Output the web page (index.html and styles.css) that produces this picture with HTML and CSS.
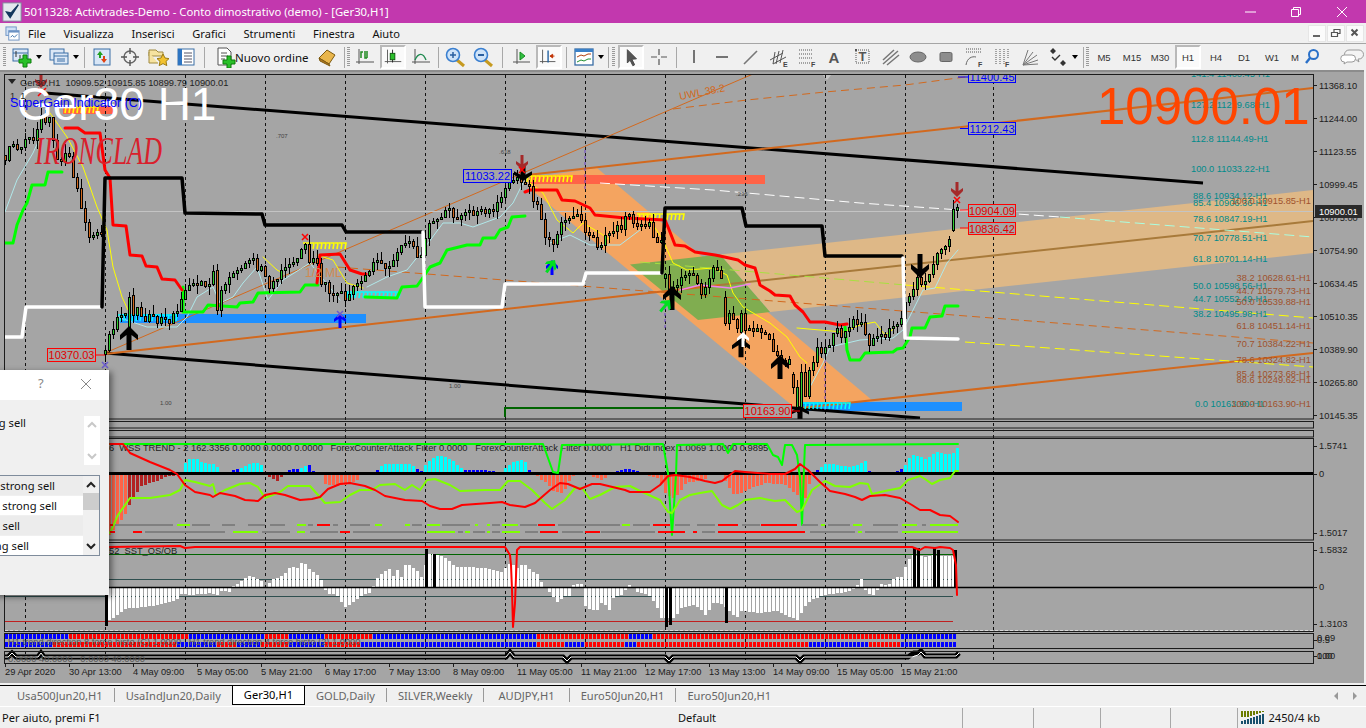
FILE: index.html
```html
<!DOCTYPE html>
<html lang="it">
<head>
<meta charset="utf-8">
<title>5011328: Activtrades-Demo - Conto dimostrativo (demo) - [Ger30,H1]</title>
<link rel="stylesheet" href="styles.css">
</head>
<body>
<div class="app">
  <header class="titlebar">
    <svg class="logo" viewBox="0 0 22 22"><rect x="1" y="1" width="20" height="20" fill="#e4e8ee"/><rect x="1" y="1" width="20" height="20" fill="none" stroke="#7d8a99"/><path d="M5 11l4 6L18 3l-8 9z" fill="#15385e" stroke="#15385e" stroke-width="1.5"/></svg>
    <span class="title-text">5011328: Activtrades-Demo - Conto dimostrativo (demo) - [Ger30,H1]</span>
    <div class="winbtns">
      <svg class="wb" viewBox="0 0 12 12"><path d="M1 6h11" stroke="#fff" fill="none"/></svg>
      <svg class="wb" viewBox="0 0 12 12"><path d="M1.5 3.5h7v7h-7zM3.5 3.5v-2h7v7h-2" stroke="#fff" fill="none"/></svg>
      <svg class="wb" viewBox="0 0 12 12"><path d="M1 1l10 10M11 1L1 11" stroke="#fff" fill="none"/></svg>
    </div>
  </header>

  <nav class="menubar">
    <svg class="mdi-icon" viewBox="0 0 16 16"><rect x="1" y="1" width="11" height="9" fill="#cfe0f5" stroke="#6d93c4"/><rect x="4" y="5" width="11" height="10" fill="#fff" stroke="#6d93c4"/><rect x="4" y="5" width="11" height="2" fill="#6d93c4"/><path d="M6 12l2-2 2 2 3-3" stroke="#3a6ea5" fill="none"/></svg>
    <span class="menu m1">File</span>
    <span class="menu m2">Visualizza</span>
    <span class="menu">Inserisci</span>
    <span class="menu">Grafici</span>
    <span class="menu">Strumenti</span>
    <span class="menu">Finestra</span>
    <span class="menu">Aiuto</span>
    <div class="mdi">
      <span class="mdib"><svg viewBox="0 0 12 12"><path d="M2 9h7" stroke="#666" stroke-width="2"/></svg></span>
      <span class="mdib"><svg viewBox="0 0 12 12"><path d="M1.5 5.5h6v4h-6zM4 5V2.5h6v4H8" stroke="#555" fill="none" stroke-width="1.2"/></svg></span>
      <span class="mdib"><svg viewBox="0 0 12 12"><path d="M2.5 2.5l6 6M8.5 2.5l-6 6" stroke="#555" stroke-width="2"/></svg></span>
    </div>
  </nav>

  <div class="toolbar">
    <i class="grip ml3"></i>
    <span class="btn ml2"><svg viewBox="0 0 24 22"><rect x="3" y="3" width="15" height="12" fill="#dbe7f6" stroke="#3a6ea5"/><path d="M3 7h15" stroke="#3a6ea5"/><path d="M6 5v6M10 9v3" stroke="#333"/><path d="M13 9h4v4h4v4h-4v4h-4v-4H9v-4h4z" fill="#28c028" stroke="#0d7d0d"/></svg></span>
    <span class="dd"></span>
    <span class="btn ml3"><svg viewBox="0 0 24 22"><rect x="3" y="3" width="14" height="11" fill="#dbe7f6" stroke="#3a6ea5"/><rect x="7" y="7" width="14" height="11" fill="#dbe7f6" stroke="#3a6ea5"/><path d="M7 10h14M10 13h8M10 15h8" stroke="#3a6ea5"/></svg></span>
    <span class="dd"></span>
    <i class="sep ml5 mr3"></i>
    <span class="btn"><svg viewBox="0 0 24 22"><rect x="4" y="3" width="16" height="16" fill="#d8e6f6" stroke="#3a6ea5"/><path d="M10 5l3 4h-2v3H9V9H7z" fill="#20a020"/><path d="M14 17l-3-4h2v-3h2v3h2z" fill="#e04010"/></svg></span>
    <span class="btn"><svg viewBox="0 0 24 22"><circle cx="12" cy="11" r="6" fill="none" stroke="#666" stroke-width="1.4"/><path d="M12 2v6M12 14v6M3 11h6M15 11h6" stroke="#555" stroke-width="1.4"/></svg></span>
    <span class="btn"><svg viewBox="0 0 24 22"><path d="M3 4h7l2 2h5v4H3z" fill="#f6e3a0" stroke="#a08a40"/><path d="M3 6v11h9" fill="#f6e3a0" stroke="#a08a40"/><path d="M17 8l2 4 4 .6-3 2.8.8 4.2-3.8-2-3.8 2 .8-4.2-3-2.8 4-.6z" fill="#f2c230" stroke="#9c7a10"/></svg></span>
    <span class="btn"><svg viewBox="0 0 24 22"><rect x="4" y="3" width="16" height="16" fill="#fff" stroke="#3a6ea5"/><rect x="4" y="3" width="4" height="16" fill="#2e75c2"/><path d="M10 7h8M10 10h8M10 13h8M10 16h8" stroke="#556"/></svg></span>
    <i class="sep ml4 mr5"></i>
    <span class="btn order"><svg viewBox="0 0 24 22"><path d="M5 2h9l4 4v13H5z" fill="#fff" stroke="#555"/><path d="M8 7h6M8 10h7M8 13h4" stroke="#555"/><path d="M14 10h4v4h4v4h-4v4h-4v-4h-4v-4h4z" fill="#28c028" stroke="#0d7d0d"/></svg><span class="order-text">Nuovo ordine</span></span>
    <span class="btn ml3"><svg viewBox="0 0 24 22"><path d="M4 12l8-8 8 5-6 9z" fill="#e9b64c" stroke="#7d5a10"/><path d="M4 12l10 6 1 2-10-5z" fill="#b0761e" stroke="#7d5a10"/></svg></span>
    <i class="sep ml3"></i>
    <i class="grip ml2 mr1"></i>
    <span class="btn"><svg viewBox="0 0 24 22"><path d="M6 3v15M3 16h18" stroke="#555" fill="none"/><path d="M8 12V6h2M14 12h-2V5M14 5v7" stroke="#208a20" fill="none" stroke-width="1.5"/></svg></span>
    <span class="btn on"><svg viewBox="0 0 24 22"><path d="M6 3v15M3 16h18" stroke="#555" fill="none"/><rect x="9" y="7" width="5" height="7" fill="#2bc02b" stroke="#0a5a0a"/><path d="M11.5 3v4M11.5 14v3" stroke="#222"/></svg></span>
    <span class="btn"><svg viewBox="0 0 24 22"><path d="M6 3v15M3 16h18" stroke="#555" fill="none"/><path d="M6 14c3-7 8-8 11 0" stroke="#208a50" fill="none" stroke-width="1.4"/></svg></span>
    <i class="sep ml3 mr2"></i>
    <span class="btn"><svg viewBox="0 0 24 22"><path d="M14 14l7 6" stroke="#c69a20" stroke-width="3"/><circle cx="10" cy="9" r="6.5" fill="#cfe3f8" stroke="#3a7fd0" stroke-width="1.6"/><path d="M7 9h6M10 6v6" stroke="#2a5fa0" stroke-width="1.5"/></svg></span>
    <span class="btn"><svg viewBox="0 0 24 22"><path d="M14 14l7 6" stroke="#c69a20" stroke-width="3"/><circle cx="10" cy="9" r="6.5" fill="#cfe3f8" stroke="#3a7fd0" stroke-width="1.6"/><path d="M7 9h6" stroke="#2a5fa0" stroke-width="2"/></svg></span>
    <i class="sep ml5 mr4"></i>
    <span class="btn"><svg viewBox="0 0 24 22"><path d="M8 3v15M4 16h17" stroke="#555" fill="none"/><path d="M11 6l5 4-5 4z" fill="#30c040" stroke="#168a20"/></svg></span>
    <span class="btn on"><svg viewBox="0 0 24 22"><path d="M5 3v15M2 16h17" stroke="#555" fill="none"/><path d="M11 4v13" stroke="#2060a0" stroke-width="1.5"/><path d="M18 10h-3M16 8l-3 2 3 2z" fill="#c03000" stroke="#c03000"/></svg></span>
    <i class="sep ml3 mr3"></i>
    <span class="btn"><svg viewBox="0 0 24 22"><rect x="3" y="3" width="18" height="16" fill="#fff" stroke="#3a6ea5" stroke-width="1.3"/><rect x="3" y="3" width="18" height="3" fill="#3a80c8"/><path d="M5 11l4-2 3 1 4-2h3" stroke="#b04010" fill="none"/><path d="M5 16l4-2 3 1 4-2h3" stroke="#209030" fill="none"/></svg></span>
    <span class="dd"></span>
    <i class="sep ml4"></i>
    <i class="grip ml3 mr2"></i>
    <span class="btn on"><svg viewBox="0 0 24 22"><path d="M8 3l10 10-5 .5 3 6-2 1-3-6-3 3z" fill="#555" stroke="#444"/></svg></span>
    <span class="btn"><svg viewBox="0 0 24 22"><path d="M12 3v6M12 13v6M4 11h6M14 11h6" stroke="#555" stroke-width="1.2"/></svg></span>
    <i class="sep ml3 mr3"></i>
    <span class="btn"><svg viewBox="0 0 24 22"><path d="M12 4v13" stroke="#555" stroke-width="1.6"/></svg></span>
    <span class="btn"><svg viewBox="0 0 24 22"><path d="M6 11h12" stroke="#555" stroke-width="1.6"/></svg></span>
    <span class="btn"><svg viewBox="0 0 24 22"><path d="M6 18L19 5" stroke="#777" stroke-width="1.6"/></svg></span>
    <span class="btn"><svg viewBox="0 0 24 22"><path d="M4 14L17 7M7 18L20 11M9 6l-2 12M13 5l-3 13M17 4l-3 13" stroke="#555" fill="none"/><text class="ic-t" x="17" y="21">E</text></svg></span>
    <span class="btn"><svg viewBox="0 0 24 22"><path d="M5 4h14M5 8h14M5 12h14M5 17h11" stroke="#555" stroke-dasharray="1 1" fill="none"/><text class="ic-t" x="17" y="21">F</text></svg></span>
    <span class="btn"><svg viewBox="0 0 24 22"><text class="ic-a" x="12" y="17">A</text></svg></span>
    <span class="btn"><svg viewBox="0 0 24 22"><rect x="6" y="4" width="13" height="13" fill="none" stroke="#555" stroke-dasharray="1 1"/><rect x="5" y="3" width="2" height="2" fill="#555"/><text class="ic-a2" x="12.5" y="15">T</text></svg></span>
    <span class="btn"><svg viewBox="0 0 24 22"><path d="M5 14L16 4M5 18L20 5M9 19L21 9" stroke="#777" stroke-width="1.5"/></svg></span>
    <span class="btn"><svg viewBox="0 0 24 22"><ellipse cx="12" cy="11" rx="8" ry="5" fill="#8d8d8d" stroke="#666"/></svg></span>
    <span class="btn"><svg viewBox="0 0 24 22"><rect x="6" y="6.5" width="12" height="9" rx="1.5" fill="#8d8d8d" stroke="#666"/></svg></span>
    <span class="btn"><svg viewBox="0 0 24 22"><path d="M4 3h15M4 6h15" stroke="#555" stroke-dasharray="1 1"/><path d="M4 19c1-7 6-9 10-8" stroke="#666" fill="none"/><text class="ic-t" x="16" y="21">F</text></svg></span>
    <span class="btn"><svg viewBox="0 0 24 22"><path d="M6 3v15M10 3v15M14 3v15M18 3v10" stroke="#555" stroke-dasharray="1 1"/><text class="ic-t" x="15" y="21">F</text></svg></span>
    <span class="btn"><svg viewBox="0 0 24 22"><path d="M5 19L10 4M5 19L15 6M5 19L19 9M5 19L20 14M5 19L20 18" stroke="#777"/></svg></span>
    <span class="btn"><svg viewBox="0 0 24 22"><path d="M7 2l3 3-3 3-3-3zM17 14l3 3-3 3-3-3z" fill="#333"/><path d="M6 11l3 3 5-5" stroke="#333" fill="none" stroke-width="1.4"/></svg></span>
    <span class="dd"></span>
    <i class="sep ml5"></i>
    <i class="grip ml2 mr1"></i>
    <span class="tf">M5</span><span class="tf">M15</span><span class="tf">M30</span><span class="tf on">H1</span><span class="tf">H4</span><span class="tf">D1</span><span class="tf">W1</span><span class="tf short">M</span>
    <span class="btn search"><svg viewBox="0 0 16 18"><circle cx="9.5" cy="6.5" r="4.5" fill="none" stroke="#2a70c8" stroke-width="2"/><path d="M6 10l-4 5" stroke="#2a70c8" stroke-width="2.4"/></svg></span>
    <span class="btn chat"><svg viewBox="0 0 24 20"><path d="M9 3h10a4 4 0 010 9h-1l1 3-4-3H9a4 4 0 010-9z" fill="#f4f4f4" stroke="#999"/><path d="M4 8h8a3.5 3.5 0 010 7H7l-3 2 .5-2A3.5 3.5 0 014 8z" fill="#fff" stroke="#999"/></svg></span>
  </div>

  <main class="chartwin">
    <svg class="chart" viewBox="0 70 1366 613" width="1366" height="613" xmlns="http://www.w3.org/2000/svg">
      <defs>
        <clipPath id="mainclip"><rect x="5" y="75" width="1308" height="344"/></clipPath>
        <path id="arw" d="M0 0L9 9V14L2.5 9V24H-2.5V9L-9 14V9Z"/>
        <path id="arwT" d="M0 0L6 6V9L1.5 6V15H-1.5V6L-6 9V6Z"/>
      </defs>
      <rect class="bgtop" x="0" y="70" width="1366" height="2"/>
      <rect class="bgedge" x="1364" y="70" width="2" height="613"/>

      <!-- bands and boxes -->
      <g clip-path="url(#mainclip)">
        <polygon class="sandy" points="528,178 597,168 873,401 800,412 528,187"/>
        <polygon class="tan" points="720,254.5 1313,190 1313,253 770,312"/>
        <polygon class="olive" points="630,264.5 720,254.5 770,312 698,320"/>
        <rect class="tomato" x="530" y="175" width="235" height="9"/>
        <rect class="tomato" x="63" y="106" width="50" height="8"/>
        <rect class="dodger" x="120" y="314" width="246" height="9"/>
        <rect class="dodger" x="803" y="402" width="159" height="9"/>
        <polygon class="tri" points="822,74 832,74 827,80"/>
      </g>

      <!-- vertical separators -->
      <g id="grid"></g>

      <g clip-path="url(#mainclip)">
        <!-- channels -->
        <path class="o3" d="M45 93L1203 183"/>
        <path class="b3" d="M105 353L920 418"/>
        <path class="ou2" d="M105 354L720 285"/>
        <path class="br2" d="M720 285L1313 221"/>
        <path class="ou2" d="M800 408L1313 353"/>
        <path class="ou2" d="M527 175L1313 88"/>
        <path class="ou1" d="M105 353L753 74"/>
        <path class="dash-o" d="M673 109L747 100L825 92L905 85L980 75"/>
        <path class="dash-w" d="M600 183L713 190L860 203L960 210L1060 217"/>
        <path class="dash-c" d="M1060 217L1313 237"/>
        <path class="dash-y" d="M905 285L1313 318"/>
        <path class="dash-o" d="M337 267L1313 343"/>
        <path class="dash-y" d="M965 342L1313 367"/>
        <path class="dash-l" d="M640 262L905 285"/>
        <path class="dgreen" d="M505 417V408H743"/>
        <path class="pur" d="M585 150V190M825 360V410M665 295V330"/>
        <path class="bid" d="M5 211.5H1313"/>

        <!-- moving averages -->
        <polyline class="yel" points="50,113 67,137 83,167 97,207 107,230 113,267 122,297 128,310"/>
        <polyline class="yel" points="263,257 277,270 283,273"/>
        <polyline class="yel" points="317,255 333,260 347,283 363,288"/>
        <polyline class="yel" points="530,183 543,193 557,220 573,233 583,223 600,233 610,240"/>
        <polyline class="yel" points="637,218 650,220 663,240 673,263 687,270 713,268 727,275 733,293 743,307 770,323 787,337 800,357 807,363"/>
        <polyline class="yel" points="797,328 820,330 843,332 860,325 875,322 885,335 895,328"/>
        <polyline class="pale" points="5,212 17,180 33,153 38,142"/>
        <polyline class="pale" points="117,317 147,327 177,327 187,317 197,297 213,287 220,303 233,297 243,283 257,267 268,300 283,280 310,263 340,300"/>
        <polyline class="pale" points="367,287 387,277 407,270 423,250 443,223 460,223 473,227 500,217 513,203 523,183"/>
        <polyline class="pale" points="550,243 570,235 590,245 620,245 640,230"/>
        <polyline class="pale" points="810,387 823,363 830,347 860,340 893,338 903,330 923,290 935,288 947,263 958,250"/>
        <polyline class="pink" points="680,290 700,285 730,288 750,284"/>
      </g>

      <g id="zig" clip-path="url(#mainclip)"></g>
      <g clip-path="url(#mainclip)">
        <!-- Stepped support and resistance -->
        <polyline class="grn" points="5,243 13,243 17,225 23,210 27,203 32,185 45,185 48,172 62,172"/>
        <polyline class="grn" points="183,287 183,312 203,312 208,305 237,307 240,303 253,302 258,293 300,292 305,285 318,285"/>
        <polyline class="grn" points="365,297 397,298 402,287 417,286 422,279 430,267 440,263 447,250 467,245 480,245 483,238 495,238 500,230 508,227 512,217 525,216"/>
        <polyline class="grn" points="845,327 847,350 850,360 860,360 865,353 893,352 897,349 903,348 910,337 912,328 925,328 930,317 942,316 945,306 958,306"/>
        <polyline class="red" points="65,128 78,128 85,133 100,133 105,170 110,178 113,225 126,226 130,255 142,256 146,266 157,267 162,279 175,280 182,290"/>
        <polyline class="red" points="317,283 320,255 340,254 350,270 362,274 366,274"/>
        <polyline class="red" points="525,192 530,190 557,190 562,200 575,201 590,208 595,215 625,218 665,220 668,227 675,245 685,246 695,252 715,255 720,256 738,260 745,265 755,268 760,285 770,291 775,295 790,296 795,305 803,312 810,322 825,322 840,325 847,324"/>
      </g>

      <g id="candles" clip-path="url(#mainclip)"></g>

      <g clip-path="url(#mainclip)">
        <polyline class="wht" points="5,337 22,337 26,307 101,307"/>
        <polyline class="blk" points="102,307 105,178 182,178 185,213 262,214 265,225 342,225 346,232 423,232"/>
        <polyline class="wht" points="423,232 425,307 502,307 505,284 583,284 586,273 662,273"/>
        <polyline class="blk" points="662,273 665,208 742,208 746,226 822,226 825,256 902,256"/>
        <polyline class="wht" points="903,258 905,338 958,339"/>

        <!-- signal arrows -->
        <use href="#arw" class="a-blk" transform="translate(129,326)"/>
        <use href="#arw" class="a-blk" transform="translate(672,286)"/>
        <use href="#arw" class="a-blk" transform="translate(741,338) scale(1,.8)"/>
        <use href="#arwT" class="a-wht" transform="translate(743,332)"/>
        <use href="#arw" class="a-blk" transform="translate(780,355)"/>
        <use href="#arw" class="a-blk" transform="translate(920,278) scale(1,-1)"/>
        <use href="#arw" class="a-blk" transform="translate(523,181) scale(1,-.7)"/>
        <use href="#arwT" class="a-dred" transform="translate(522,170) scale(1,-1)"/>
        <use href="#arwT" class="a-dred" transform="translate(957,197) scale(1,-1)"/>
        <use href="#arwT" class="a-dred" transform="translate(41,88) scale(1,-1)"/>
        <use href="#arwT" class="a-blu" transform="translate(340,313)"/>
        <use href="#arwT" class="a-blu" transform="translate(552,260)"/>
        <use href="#arwT" class="a-grn" transform="translate(555,260) rotate(35)"/>
        <use href="#arwT" class="a-grn" transform="translate(670,300) rotate(40)"/>
        <use href="#arw" class="a-blk" transform="translate(800,406) scale(1,.6)"/>
        <path class="x-red" d="M302 234l6 6M308 234l-6 6M519 167l6 6M525 167l-6 6M954 197l6 6M960 197l-6 6M38 88l8 8M38 96l8-8"/>
        <path class="x-pur" d="M102 362l6 6M108 362l-6 6M337 311l6 6M343 311l-6 6"/>
        <path class="price-line" d="M96 355H105M960 210H968M960 228H968M792 411H800"/>
      </g>

      <!-- small object labels -->
      <g clip-path="url(#mainclip)">
        <text class="wee" x="276" y="138">.707</text>
        <text class="wee" x="160" y="405">1.00</text>
        <text class="wee" x="499" y="154">.618</text>
        <text class="wee" x="736" y="196">.236</text>
        <text class="wee" x="449" y="388">1.00</text>
        <text class="ml-t" x="305" y="277">1/2 ML</text>
        <text class="uwl" transform="translate(680,100) rotate(-11)">UWL 38.2</text>
        <text class="iron" x="35" y="164" textLength="127" lengthAdjust="spacingAndGlyphs">IRONCLAD</text>

        <text class="te" x="1191" y="77">141.4 11400.45-H1</text>
        <text class="te" x="1191" y="108">127.2 11219.68-H1</text>
        <text class="te" x="1191" y="142">112.8 11144.49-H1</text>
        <text class="te" x="1191" y="172">100.0 11033.22-H1</text>
        <text class="te" x="1193" y="199">88.6 10934.12-H1</text>
        <text class="te" x="1193" y="206">85.4 10906.36-H1</text>
        <text class="te" x="1193" y="222">78.6 10847.19-H1</text>
        <text class="te" x="1193" y="241">70.7 10778.51-H1</text>
        <text class="te" x="1193" y="262">61.8 10701.14-H1</text>
        <text class="te" x="1193" y="289">50.0 10598.56-H1</text>
        <text class="te" x="1193" y="302">44.7 10552.49-H1</text>
        <text class="te" x="1193" y="317">38.2 10495.98-H1</text>
        <text class="te" x="1195" y="407">0.0 10163.90-H1</text>
        <text class="si" x="1311" y="204">100.0 10915.85-H1</text>
        <text class="si" x="1311" y="281">38.2 10628.61-H1</text>
        <text class="si" x="1311" y="294">44.7 10579.73-H1</text>
        <text class="si" x="1311" y="305">50.0 10539.88-H1</text>
        <text class="si" x="1311" y="329">61.8 10451.14-H1</text>
        <text class="si" x="1311" y="347">70.7 10384.22-H1</text>
        <text class="si" x="1311" y="363">78.6 10324.82-H1</text>
        <text class="si" x="1311" y="377">85.4 10273.68-H1</text>
        <text class="si" x="1311" y="383">88.6 10249.62-H1</text>
        <text class="si" x="1311" y="407">100.0 10163.90-H1</text>

        <path class="blu-line" d="M958 77H969M960 128.5H969"/>
        <rect class="box-b" x="968.5" y="72.5" width="47" height="10"/>
        <text class="lbl-b" x="992" y="81">11400.45</text>
        <rect class="box-b" x="968.5" y="122.5" width="47" height="12"/>
        <text class="lbl-b" x="992" y="132.5">11212.43</text>
        <rect class="box-b" x="463.5" y="169.5" width="48" height="13"/>
        <text class="lbl-b" x="487.5" y="180">11033.22</text>
        <rect class="box-r" x="47.5" y="348.5" width="48" height="13"/>
        <text class="lbl-r" x="71.5" y="359">10370.03</text>
        <rect class="box-r" x="743.5" y="404.5" width="48" height="13"/>
        <text class="lbl-r" x="767.5" y="415">10163.90</text>
        <rect class="box-r" x="968.5" y="204.5" width="47" height="12"/>
        <text class="lbl-r" x="992" y="215">10904.09</text>
        <rect class="box-r" x="968.5" y="222.5" width="47" height="12"/>
        <text class="lbl-r" x="992" y="233">10836.42</text>

        <text class="big-w" x="17" y="120">Ger30 H1</text>
        <text class="big-o" x="1097" y="124">10900.01</text>
        <path class="tri-d" d="M8 79h8l-4 5z"/>
        <text class="ohlc" x="20" y="86">Ger30,H1  10909.52 10915.85 10899.79 10900.01</text>
        <text class="ohlc" x="10" y="99">1  1</text>
        <text class="sgi" x="10" y="107">SuperGain Indicator (C)</text>
      </g>

      <!-- oscillator 1 -->
      <text class="ohlc" x="109" y="451">6  WSS TREND - 2 162.3356 0.0000 0.0000 0.0000   ForexCounterAttack Filter 0.0000   ForexCounterAttack Filter 0.0000   H1 Didi index 1.0069 1.0000 0.9895</text>
      <g id="hist1"></g>
      <path class="zero" d="M5 473.5H1313"/>
      <polyline class="grn2" points="110,444 543,444 553,472 558,473 562,445 663,444 668,473 672,535 676,475 677,445 723,444 728,453 733,444 767,444 773,455 778,457 782,465 785,445 792,445 797,455 800,478 802,525 804,468 805,445 958,444"/>
      <polyline class="lime" points="110,533 118,515 130,498 150,498 170,495 180,490 185,480 195,482 210,486 213,484 216,495 225,490 240,484 250,483 258,487 265,498 280,492 288,486 300,486 310,486 318,495 325,503 340,502 350,495 360,490 372,490 380,485 395,484 405,490 412,485 420,490 427,480 435,479 450,485 460,491 485,490 500,490 508,481 520,481 532,490 545,503 552,509 565,500 575,488 582,488 590,499 600,495 615,487 630,486 640,491 660,500 668,512 672,513 680,500 690,495 700,493 712,491 722,505 730,509 738,505 745,500 760,498 775,501 785,500 797,512 802,510 812,490 825,481 835,486 850,487 860,483 868,484 872,494 885,491 900,488 908,480 920,476 925,479 932,484 940,480 950,478 955,471 958,471"/>
      <polyline class="redc" points="110,444 123,444 130,453 150,462 170,470 177,474 185,485 195,492 210,495 213,497 220,493 235,496 245,500 258,501 265,495 275,493 285,495 300,500 312,499 320,497 328,489 340,484 350,483 365,486 375,490 385,496 405,500 422,501 430,506 440,509 452,509 462,505 490,503 502,502 510,505 525,507 535,503 550,490 560,483 568,484 580,489 592,484 600,484 625,490 630,492 650,492 660,485 668,476 675,475 690,477 705,481 715,483 722,481 735,471 745,472 770,474 785,474 795,469 800,464 808,470 820,482 830,491 845,494 855,497 862,500 870,496 885,495 900,498 912,505 920,510 930,510 940,515 950,516 958,522"/>
      <g id="dashes"></g>

      <!-- oscillator 2 -->
      <text class="ohlc" x="109" y="554">52  SST_OS/OB</text>
      <path class="lvl-g" d="M5 554.5H953"/>
      <path class="lvl-t" d="M5 579.5H953M5 596.5H953"/>
      <path class="lvl-r" d="M5 621.5H953"/>
      <g id="hist2"></g>
      <path class="zero2" d="M5 587.5H1313"/>
      <polyline class="redc" points="110,547 180,546 185,548 195,547 505,547 510,555 511,565 512,590 513,627 515,603 517,550 520,547 912,547 920,550 925,547 935,548 940,547 950,548 953,550 956,565 957,595"/>
      <path class="dash-g" d="M5 630.5H1313"/>

      <!-- direction squares -->
      <g id="squares"></g>
      <text class="faint" x="8" y="645">H1 trend direction 8 force histo (C) 1.0000   H1 trend direction 4 force histo (2) 1.0000</text>

      <!-- bottom line pane -->
      <polyline class="hl-b" points="5,657 8,657 12,653 16,657 38,657 41,653 44,657 506,657 510,652 514,657 563,657 567,661 571,657 665,657 669,661 673,657 796,657 800,661 804,657 908,657 914,653 918,653 921,651 925,656 956,656 959,653"/>
      <polyline class="hl-w" points="5,657 8,657 12,653 16,657 38,657 41,653 44,657 506,657 510,652 514,657 563,657 567,661 571,657 665,657 669,661 673,657 796,657 800,661 804,657 912,657 918,655 921,652 925,656 956,656 959,653"/>
      <text class="faint" x="8" y="662">0.0000 40.0000   0.0000 40.0000</text>

      <!-- pane frames -->
      <g class="frames">
        <rect x="4.5" y="74.5" width="1309" height="344.5"/>
        <rect x="4.5" y="421.5" width="1309" height="6.5"/>
        <rect x="4.5" y="430.5" width="1309" height="6.5"/>
        <rect x="4.5" y="438.5" width="1309" height="101.5"/>
        <rect x="4.5" y="542.5" width="1309" height="89"/>
        <rect x="4.5" y="633.5" width="1309" height="15"/>
        <rect x="4.5" y="651.5" width="1309" height="12"/>
      </g>
      <g id="ticks"></g>

      <!-- price scale -->
      <g class="axis">
        <text x="1319" y="89">11368.10</text>
        <text x="1319" y="122">11244.00</text>
        <text x="1319" y="155">11123.55</text>
        <text x="1319" y="188">10999.45</text>
        <text x="1319" y="221">10875.00</text>
        <text x="1319" y="254">10754.90</text>
        <text x="1319" y="287">10634.45</text>
        <text x="1319" y="320">10510.35</text>
        <text x="1319" y="353">10389.90</text>
        <text x="1319" y="386">10265.80</text>
        <text x="1319" y="419">10145.35</text>
        <text x="1319" y="449">1.5741</text>
        <text x="1319" y="477">0</text>
        <text x="1319" y="536">1.5017</text>
        <text x="1319" y="553">1.5832</text>
        <text x="1319" y="590">0</text>
        <text x="1319" y="627">1.3103</text>
        <text x="1317" y="641">0.09</text>
        <text x="1317" y="643">0.5</text>
        <text x="1317" y="659">0.00</text>
        <text x="1317" y="659">100</text>
      </g>
      <rect class="tag" x="1315" y="205" width="47" height="13"/>
      <text class="tag-t" x="1319" y="215">10900.01</text>

      <!-- time scale -->
      <g class="axis">
        <text x="5" y="675">29 Apr 2020</text>
        <text x="69" y="675">30 Apr 13:00</text>
        <text x="133" y="675">4 May 09:00</text>
        <text x="197" y="675">5 May 05:00</text>
        <text x="261" y="675">5 May 21:00</text>
        <text x="325" y="675">6 May 17:00</text>
        <text x="389" y="675">7 May 13:00</text>
        <text x="453" y="675">8 May 09:00</text>
        <text x="517" y="675">11 May 05:00</text>
        <text x="581" y="675">11 May 21:00</text>
        <text x="645" y="675">12 May 17:00</text>
        <text x="709" y="675">13 May 13:00</text>
        <text x="773" y="675">14 May 09:00</text>
        <text x="837" y="675">15 May 05:00</text>
        <text x="901" y="675">15 May 21:00</text>
      </g>
    </svg>

    <section class="dialog">
      <div class="dlg-title"><span class="dlg-q">?</span><svg class="dlg-x" viewBox="0 0 12 12"><path d="M1 1l10 10M11 1L1 11" stroke="#888" fill="none"/></svg></div>
      <div class="dlg-body">
        <div class="dlg-top">
          <span class="dlg-line">Segnale H1 strong sell</span>
          <div class="dlg-scroll"><svg viewBox="0 0 12 8"><path d="M2 6l4-4 4 4" stroke="#c8c8c8" fill="none" stroke-width="2"/></svg><svg viewBox="0 0 12 8"><path d="M2 2l4 4 4-4" stroke="#c8c8c8" fill="none" stroke-width="2"/></svg></div>
        </div>
        <div class="dlg-list">
          <div class="dlg-rows">
            <div class="row alt p28">Segnale 1: strong sell</div>
            <div class="row p26">Segnale 2: strong sell</div>
            <div class="row alt p63">Segnale 3: strong sell</div>
            <div class="row p54">Segnale 4: strong sell</div>
          </div>
          <div class="dlg-sb">
            <svg viewBox="0 0 12 8"><path d="M2 6l4-4 4 4" stroke="#222" fill="none" stroke-width="2"/></svg>
            <i class="thumb"></i>
            <svg viewBox="0 0 12 8"><path d="M2 2l4 4 4-4" stroke="#222" fill="none" stroke-width="2"/></svg>
          </div>
        </div>
      </div>
    </section>
  </main>

  <div class="tabs">
    <span class="tab">Usa500Jun20,H1</span><i class="tsep"></i>
    <span class="tab">UsaIndJun20,Daily</span>
    <span class="tab active">Ger30,H1</span>
    <span class="tab">GOLD,Daily</span><i class="tsep"></i>
    <span class="tab">SILVER,Weekly</span><i class="tsep"></i>
    <span class="tab aud">AUDJPY,H1</span><i class="tsep"></i>
    <span class="tab">Euro50Jun20,H1</span><i class="tsep"></i>
    <span class="tab">Euro50Jun20,H1</span>
    <div class="tab-nav"><i class="tl"></i><i class="tr"></i></div>
  </div>

  <footer class="status">
    <span class="st-help">Per aiuto, premi F1</span>
    <span class="st-prof">Default</span>
    <i class="st-sep s1"></i><i class="st-sep s2"></i><i class="st-sep s3"></i><i class="st-sep s4"></i><i class="st-sep s5"></i>
    <svg class="st-bars" viewBox="0 0 24 13"><path d="M1 0v6M4 0v6M7 0v6M10 0v5M13 0v4M16 0v3M19 0v2M22 0v1" stroke="#6b7d00" stroke-width="2"/><path d="M1 10v3M4 9v4M7 8v5M10 7v6M13 6v7M16 5v8M19 4v9M22 3v10" stroke="#17506c" stroke-width="2"/></svg>
    <span class="st-kb">2450/4 kb</span>
  </footer>
</div>
<script src="chart.js"></script>
</body>
</html>
```
FILE: styles.css
```css
* { box-sizing: border-box; }
html, body { margin: 0; padding: 0; overflow: hidden; background: #f0f0f0; }
.app { width: 1366px; height: 728px; display: flex; flex-direction: column; overflow: hidden;
  font-family: "Noto Sans", "Liberation Sans", sans-serif; font-size: 11px; color: #111; }

/* window title */
.titlebar { height: 23px; background: #c238ae; display: flex; align-items: center; color: #fff; padding-left: 2px; }
.logo { width: 20px; height: 20px; }
.title-text { margin-left: 2px; font-size: 11.3px; white-space: nowrap; }
.winbtns { margin-left: auto; display: flex; padding-right: 18px; gap: 34px; }
.wb { width: 12px; height: 12px; }

/* menu */
.menubar { height: 21px; background: #f0f0f0; border-bottom: 1px solid #a5a5a5; display: flex; align-items: center; padding-left: 5px; gap: 17.7px; position: relative; }
.mdi-icon { width: 15px; height: 15px; }
.menu { font-size: 11.1px; white-space: nowrap; }
.m1 { margin-left: -9.7px; }
.mdi { margin-left: auto; display: flex; gap: 1px; padding-right: 2px; }
.mdib { width: 18px; height: 17px; background: #fbfbfb; border: 1px solid #e6e6e6; display: flex; align-items: center; justify-content: center; }
.mdib svg { width: 12px; height: 12px; }

/* toolbar */
.toolbar { height: 26px; background: #f0f0f0; display: flex; align-items: center; }
.grip { display: block; width: 3px; height: 20px; background: repeating-linear-gradient(#9a9a9a 0 1px, #f0f0f0 1px 2px); }
.sep { display: block; width: 1px; height: 21px; background: #a8a8a8; }
.ml2 { margin-left: 2px; } .ml3 { margin-left: 3px; } .ml4 { margin-left: 4px; } .ml5 { margin-left: 5px; }
.mr1 { margin-right: 1px; } .mr2 { margin-right: 2px; } .mr3 { margin-right: 3px; } .mr4 { margin-right: 4px; } .mr5 { margin-right: 5px; }
.btn { width: 28px; height: 24px; display: flex; align-items: center; justify-content: center; flex: none; }
.btn svg { width: 24px; height: 22px; }
.btn.on { width: 26px; margin: 0 1px; background: #fafafa; border: 2px solid; border-color: #b9b9b9 #fff #fff #b9b9b9; }
.dd { width: 6px; height: 24px; position: relative; flex: none; }
.dd::after { content: ""; position: absolute; left: 0; top: 10px; border: 3px solid transparent; border-top: 4px solid #000; border-bottom: 0; }
.order { width: 100px; justify-content: flex-start; padding-left: 3px; }
.order-text { font-size: 11.5px; margin-left: -2px; white-space: nowrap; }
.ic-t { font: bold 7px "Liberation Sans", sans-serif; fill: #444; }
.ic-a { font: bold 15px "Liberation Sans", sans-serif; fill: #555; text-anchor: middle; }
.ic-a2 { font: bold 13px "Liberation Sans", sans-serif; fill: #555; text-anchor: middle; }
.tf { width: 28px; height: 24px; display: flex; align-items: center; justify-content: center; font-family: "Liberation Sans", sans-serif; font-size: 9.5px; color: #333; flex: none; }
.tf.on { width: 26px; margin: 0 1px; background: #fafafa; border: 2px solid; border-color: #b9b9b9 #fff #fff #b9b9b9; }
.tf.short { width: 18px; }
.search { width: 16px; }
.search svg { width: 16px; height: 18px; }
.chat { margin-left: 18px; }

/* chart window */
.chartwin { height: 613px; position: relative; background: #a5a5a5; }
.chart { display: block; font-family: "Liberation Sans", sans-serif; }
.bgtop { fill: #8c8c8c; }
.bgedge { fill: #f0f0f0; }
.sandy { fill: #f4a460; }
.tan { fill: #deb887; }
.olive { fill: #80ad50; }
.tomato { fill: #ff6347; }
.dodger { fill: #1e90ff; }
.tri { fill: #c4c4c4; }
.grid-l { stroke: #111; stroke-width: 1; stroke-dasharray: 3 3; shape-rendering: crispEdges; }
polyline, .o3, .b3, .ou2, .br2, .ou1, .dash-o, .dash-w, .dash-c, .dash-y, .dash-l, .dgreen, .pur, .bid, .x-red, .x-pur, .price-line, .blu-line, .zero, .zero2, .lvl-g, .lvl-t, .lvl-r, .dash-g { fill: none; }
polyline { stroke-linejoin: round; stroke-linecap: round; }
.o3, .b3 { stroke: #000; stroke-width: 3; }
.ou2 { stroke: #d2691e; stroke-width: 2; }
.br2 { stroke: #a87a3a; stroke-width: 2; }
.ou1 { stroke: #d2691e; stroke-width: 1; }
.dash-o { stroke: #d2691e; stroke-width: 1; stroke-dasharray: 8 5; }
.dash-w { stroke: #fff; stroke-width: 1; stroke-dasharray: 10 5; }
.dash-c { stroke: #aaffe0; stroke-width: 1; stroke-dasharray: 10 5; }
.dash-y { stroke: #ffff00; stroke-width: 1; stroke-dasharray: 10 5; }
.dash-l { stroke: #a8e040; stroke-width: 1; stroke-dasharray: 10 5; }
.dgreen { stroke: #006400; stroke-width: 2; }
.pur { stroke: #6a40c8; stroke-width: 1; stroke-dasharray: 3 3; }
.bid { stroke: #c4c4c4; stroke-width: 1; shape-rendering: crispEdges; }
.yel { stroke: #ffff00; stroke-width: 1; }
.pale { stroke: #b0e8ea; stroke-width: 1; }
.pink { stroke: #ee82ee; stroke-width: 1.5; }
.grn { stroke: #00ff00; stroke-width: 3; }
.red { stroke: #ff0000; stroke-width: 3; }
.wht { stroke: #fff; stroke-width: 3.5; }
.blk { stroke: #000; stroke-width: 3.5; }
.wick { stroke: #000; stroke-width: 1; shape-rendering: crispEdges; }
.c-up { fill: #32cd32; stroke: #000; stroke-width: 1; shape-rendering: crispEdges; }
.c-dn { fill: #d2691e; stroke: #000; stroke-width: 1; shape-rendering: crispEdges; }
.zig-y { stroke: #ffff00; stroke-width: 1.6; }
.zig-c { stroke: #00ffff; stroke-width: 1.6; }
.a-blk { fill: #000; }
.a-wht { fill: #fff; }
.a-dred { fill: #a52a2a; }
.a-blu { fill: #0000ff; }
.a-grn { fill: #00e020; }
.x-red { stroke: #ff0000; stroke-width: 1.5; }
.x-pur { stroke: #6a5acd; stroke-width: 1.5; }
.price-line { stroke: #ff0000; stroke-width: 1; }
.blu-line { stroke: #0000ff; stroke-width: 1; }
.wee { font-size: 6px; fill: #444; }
.ml-t { font-size: 12px; fill: #d28a50; }
.uwl { font-size: 10.5px; fill: #d2691e; }
.iron { font-family: "Liberation Serif", serif; font-style: italic; font-size: 40px; fill: #d9202c; }
.te { font-size: 9.3px; fill: #008b8b; }
.si { font-size: 9.3px; fill: #a0522d; text-anchor: end; }
.box-b, .box-r { fill: #a5a5a5; stroke-width: 1; }
.box-b { stroke: #0000ff; }
.box-r { stroke: #ff0000; }
.lbl-b, .lbl-r { font-size: 11px; text-anchor: middle; }
.lbl-b { fill: #0000ff; }
.lbl-r { fill: #e00000; }
.big-w { font-size: 46px; fill: #fff; }
.big-o { font-size: 51px; fill: #ff4500; }
.tri-d { fill: #222; }
.ohlc { font-size: 9.3px; fill: #222; white-space: pre; }
.sgi { font-size: 12.5px; fill: #0000ff; }
.faint { font-size: 9.3px; fill: #555; white-space: pre; }
.zero { stroke: #000; stroke-width: 3; }
.zero2 { stroke: #000; stroke-width: 1.5; }
.grn2 { stroke: #00ff00; stroke-width: 2; }
.lime { stroke: #7fff00; stroke-width: 2; }
.redc { stroke: #ff0000; stroke-width: 2; }
.lvl-g { stroke: #006400; stroke-width: 1; }
.lvl-t { stroke: #2f4f4f; stroke-width: 1; }
.lvl-r { stroke: #c02020; stroke-width: 1; }
.dash-g { stroke: #d8d8d8; stroke-width: 1; stroke-dasharray: 3 2; }
.hist-cy { fill: #00ffff; }
.hist-bl { fill: #0000ff; }
.hist-to { fill: #ff6347; }
.hist-fb { fill: #b22222; }
.hist-w { fill: #fff; }
.hist-k { fill: #000; }
.sq-b { fill: #0000ff; }
.sq-r { fill: #ff0000; }
.seg { stroke-width: 2; }
.seg-g { stroke: #808080; }
.seg-l { stroke: #7fff00; }
.seg-r { stroke: #ff0000; }
.hl-b { stroke: #000; stroke-width: 5; stroke-linejoin: miter; stroke-linecap: butt; }
.hl-w { stroke: #fff; stroke-width: 1; stroke-linejoin: miter; stroke-linecap: butt; }
.frames rect { fill: none; stroke: #1c1c1c; stroke-width: 1; }
.tick { stroke: #1c1c1c; stroke-width: 1; }
.axis text { font-size: 9.3px; fill: #1c1c1c; }
.tag { fill: #2a2a2a; }
.tag-t { font-size: 9.3px; fill: #fff; }

/* floating dialog */
.dialog { position: absolute; left: -200px; top: 300px; width: 309px; height: 225px; background: #f0f0f0; display: flex; flex-direction: column; box-shadow: 3px 2px 6px rgba(0,0,0,.45); }
.dlg-title { height: 30px; background: #fff; position: relative; flex: none; }
.dlg-q { position: absolute; left: 238px; top: 4px; font-size: 13px; color: #888; }
.dlg-x { position: absolute; left: 280px; top: 8px; width: 12px; height: 12px; }
.dlg-body { flex: 1; padding: 16px 9px 0 0; }
.dlg-top { height: 49px; display: flex; justify-content: flex-end; }
.dlg-line { font-size: 11.2px; margin-right: 58px; margin-top: -1px; white-space: nowrap; line-height: 16px; }
.dlg-scroll { width: 16px; background: #fff; display: flex; flex-direction: column; justify-content: space-between; align-items: center; padding: 5px 0; }
.dlg-scroll svg { width: 12px; height: 8px; }
.dlg-list { height: 81px; margin-top: 10px; border: 1px solid #7f8c9c; background: #fff; display: flex; margin-left: 100px; }
.dlg-rows { flex: 1; overflow: hidden; }
.row { height: 20px; line-height: 20px; text-align: right; font-size: 11.2px; white-space: nowrap; border-bottom: 1px solid #f0f0f0; }
.row.alt { background: #ececec; }
.p28 { padding-right: 28px; } .p26 { padding-right: 26px; } .p63 { padding-right: 63px; } .p54 { padding-right: 54px; }
.dlg-sb { width: 16px; background: #f0f0f0; display: flex; flex-direction: column; align-items: center; justify-content: space-between; padding: 5px 0; position: relative; }
.dlg-sb svg { width: 12px; height: 8px; }
.thumb { position: absolute; left: 0; top: 17px; width: 16px; height: 17px; background: #cdcdcd; }

/* tabs */
.tabs { height: 21px; margin-top: 2px; border-top: 1px solid #000; background: #f0f0f0; display: flex; align-items: stretch; padding-left: 6px; position: relative; }
.tab { padding: 0 11px; line-height: 19px; color: #666; white-space: nowrap; font-size: 11.1px; }
.tab.aud { padding: 0 14px; }
.tab.active { color: #000; background: #fff; border: 1px solid #000; border-top: 0; height: 19px; line-height: 18px; padding: 0 11px; }
.tsep { display: block; width: 1px; height: 14px; margin-top: 2px; background: #999; }
.tab-nav { margin-left: auto; display: flex; align-items: center; gap: 15px; padding-right: 9px; }
.tl, .tr { display: block; width: 0; height: 0; border: 4px solid transparent; }
.tl { border-right: 4px solid #999; border-left: 0; }
.tr { border-left: 4px solid #999; border-right: 0; }

/* status bar */
.status { height: 22px; border-top: 1px solid #fff; background: #f0f0f0; position: relative; display: flex; align-items: center; padding-left: 2px; font-size: 11.1px; }
.st-help { width: 676px; white-space: nowrap; }
.st-prof { white-space: nowrap; }
.st-sep { display: block; width: 1px; height: 20px; background: #a8a8a8; position: absolute; top: 1px; }
.s1 { left: 962px; } .s2 { left: 1033px; } .s3 { left: 1100px; } .s4 { left: 1170px; } .s5 { left: 1237px; }
.st-bars { width: 24px; height: 13px; margin-left: auto; margin-right: 4px; }
.st-kb { white-space: nowrap; padding-right: 46px; }
```
FILE: chart.js
```js
(function () {
  var NS = 'http://www.w3.org/2000/svg';
  function el(parent, tag, attrs) {
    var e = document.createElementNS(NS, tag);
    for (var k in attrs) e.setAttribute(k, attrs[k]);
    parent.appendChild(e);
    return e;
  }
  function interp(p, x) {
    if (x <= p[0][0]) return p[0][1];
    for (var i = 1; i < p.length; i++) {
      if (x <= p[i][0]) {
        var a = p[i - 1], b = p[i];
        return a[1] + (b[1] - a[1]) * (x - a[0]) / (b[0] - a[0]);
      }
    }
    return p[p.length - 1][1];
  }
  var seed = 20200515;
  function rnd() {
    seed = (seed * 1664525 + 1013904223) % 4294967296;
    return seed / 4294967296;
  }

  // Vertical separators
  var grid = document.getElementById('grid');
  [25, 105, 185, 265, 345, 425, 505, 585, 665, 745, 825, 905, 993].forEach(function (x) {
    el(grid, 'line', { x1: x + .5, x2: x + .5, y1: 75, y2: 663, 'class': 'grid-l' });
  });

  // Price path of the candles, in pixels
  var PATH = [[5,155],[10,146],[20,147],[30,140],[37,130],[42,115],[50,120],[55,155],[62,160],[68,150],[72,175],[78,195],[85,225],[90,235],[96,230],[101,235],[105,350],[110,335],[113,325],[118,320],[125,310],[130,300],[135,300],[140,315],[150,318],[160,320],[170,320],[175,315],[180,300],[182,290],[190,282],[200,283],[210,280],[215,270],[220,295],[225,285],[230,280],[240,270],[245,260],[252,260],[262,270],[265,280],[270,290],[275,282],[280,272],[285,268],[290,258],[295,262],[300,250],[305,248],[310,262],[315,258],[320,280],[325,285],[330,292],[340,295],[345,298],[350,290],[360,285],[365,278],[375,262],[380,268],[390,262],[395,252],[400,248],[405,245],[412,245],[420,258],[425,235],[430,222],[440,218],[450,212],[460,215],[470,212],[480,210],[495,208],[500,200],[505,190],[510,182],[520,180],[525,188],[530,190],[535,200],[540,215],[545,235],[550,245],[555,245],[560,225],[570,215],[580,218],[585,235],[590,240],[600,245],[605,235],[610,230],[620,225],[630,215],[640,225],[650,225],[655,240],[661,245],[664,275],[668,290],[672,290],[680,275],[690,270],[695,270],[700,290],[705,285],[712,270],[720,275],[725,290],[730,320],[740,325],[750,325],[760,330],[770,345],[775,350],[780,360],[785,360],[790,365],[795,385],[799,405],[805,395],[810,370],[815,350],[820,350],[830,345],[835,330],[845,335],[850,320],[860,320],[870,345],[880,335],[890,330],[900,318],[905,300],[910,290],[915,280],[925,280],[930,275],[935,255],[945,247],[950,235],[955,210],[959,208]];
  // Bars that are read directly from the chart: open, close
  var FIXED = { 129: [327, 297], 133: [295, 315], 217: [270, 310], 725: [297, 323], 741: [332, 313], 793: [374, 387], 797: [407, 387], 801: [407, 372], 953: [230, 209], 957: [210, 207] };
  var cg = document.getElementById('candles');
  var prev = interp(PATH, 1);
  for (var x = 5; x <= 957; x += 4) {
    var c = Math.round(interp(PATH, x) + (rnd() - .5) * 10);
    var o = prev;
    if (Math.abs(c - o) > 30) o = c + 4;
    if (Math.abs(c - o) < 2) c = o - 2;
    if (FIXED[x]) { o = FIXED[x][0]; c = FIXED[x][1]; }
    var top = Math.min(o, c), bot = Math.max(o, c);
    var hi = Math.round(top - rnd() * 9), lo = Math.round(bot + rnd() * 9);
    el(cg, 'line', { x1: x + .5, x2: x + .5, y1: hi, y2: lo, 'class': 'wick' });
    el(cg, 'rect', { x: x - .5, y: top + .5, width: 2, height: bot - top, 'class': c < o ? 'c-up' : 'c-dn' });
    prev = c;
  }

  // Hatched signal strips
  var zg = document.getElementById('zig');
  function zig(a, b, y, cls) {
    for (var z = a; z < b; z += 4) el(zg, 'path', { d: 'M' + z + ' ' + (y - 3) + 'h3l-1 6', fill: 'none', 'class': cls });
  }
  zig(63, 96, 110, 'zig-y');
  zig(303, 347, 246, 'zig-y');
  zig(525, 573, 179, 'zig-y');
  zig(637, 684, 217, 'zig-y');
  zig(118, 175, 318, 'zig-c');
  zig(345, 400, 295, 'zig-c');
  zig(803, 850, 406, 'zig-c');

  // WSS trend histogram
  var H1 = [[108,-62],[118,-50],[125,-40],[130,-27],[140,-13],[155,-8],[165,-4],[175,-2],[180,1],[183,8],[186,15],[190,13],[195,15],[200,11],[210,9],[215,8],[220,0],[225,1],[230,1],[232,3],[240,5],[250,10],[255,11],[260,8],[262,4],[264,0],[267,-3],[272,-6],[277,-8],[282,-2],[285,2],[288,3],[300,5],[308,8],[312,2],[320,0],[323,-11],[335,-13],[345,-12],[355,-8],[358,-4],[360,-2],[370,0],[375,2],[380,7],[385,9],[410,9],[415,5],[420,2],[425,10],[430,14],[435,17],[445,16],[452,12],[458,6],[465,3],[480,3],[500,1],[505,6],[512,11],[520,13],[525,10],[528,3],[532,0],[535,-2],[540,-7],[545,-10],[552,-18],[560,-20],[565,-15],[568,-8],[570,-4],[580,0],[585,1],[590,-3],[600,-7],[605,-4],[610,0],[625,4],[635,3],[640,0],[650,-4],[655,-4],[660,-10],[665,-22],[672,-25],[678,-20],[685,-10],[695,-8],[705,-6],[708,-2],[715,-2],[720,-2],[728,-15],[733,-22],[740,-20],[750,-15],[765,-10],[785,-12],[795,-22],[805,-25],[807,-15],[809,-7],[811,1],[818,4],[825,10],[835,8],[850,6],[860,10],[865,12],[868,2],[872,-2],[878,-2],[885,0],[890,1],[895,2],[900,4],[903,6],[907,14],[912,18],[918,17],[925,14],[935,21],[945,19],[952,20],[958,27]];
  var h1 = document.getElementById('hist1');
  for (x = 108; x <= 958; x += 4) {
    var v = Math.round(interp(H1, x));
    if (!v) continue;
    var cls;
    if (v > 0) cls = v > 4 && !(x >= 305 && x <= 310) ? 'hist-cy' : 'hist-bl';
    else cls = (x > 127 && x < 182) || (x > 262 && x < 282) ? 'hist-fb' : 'hist-to';
    el(h1, 'rect', { x: x, y: v > 0 ? 473 - v : 473, width: 3, height: Math.abs(v), 'class': cls });
  }

  // Dashed state rows
  var dg = document.getElementById('dashes');
  function segs(y, list) {
    list.forEach(function (s) {
      el(dg, 'line', { x1: s[0], x2: s[1], y1: y, y2: y, 'class': 'seg seg-' + s[2] });
    });
  }
  segs(525, [[110,113,'r'],[115,173,'g'],[177,190,'l'],[192,210,'g'],[222,235,'g'],[248,265,'g'],[270,285,'g'],[297,306,'l'],[308,313,'g'],[317,330,'r'],[333,338,'g'],[350,370,'g'],[375,382,'l'],[405,410,'l'],[412,422,'g'],[427,440,'l'],[442,470,'g'],[475,478,'l'],[487,490,'l'],[492,500,'g'],[502,518,'l'],[520,537,'g'],[538,555,'r'],[558,620,'g'],[622,630,'l'],[633,650,'g'],[653,670,'r'],[675,690,'g'],[697,715,'g'],[718,738,'r'],[742,760,'g'],[761,797,'r'],[802,818,'g'],[821,825,'l'],[828,850,'g'],[853,862,'l'],[873,898,'g'],[902,917,'l'],[922,926,'g'],[930,958,'l']]);
  segs(532, [[110,115,'r'],[133,142,'r'],[145,225,'g'],[233,258,'l'],[262,290,'g'],[297,305,'l'],[310,338,'g'],[340,350,'r'],[353,424,'g'],[427,455,'l'],[458,463,'g'],[465,470,'l'],[473,485,'g'],[487,490,'l'],[492,500,'g'],[502,520,'l'],[525,538,'g'],[540,558,'r'],[562,583,'g'],[585,600,'r'],[601,655,'g'],[658,685,'r'],[693,697,'r'],[702,715,'g'],[718,805,'r'],[810,855,'g'],[858,862,'l'],[865,898,'g'],[902,958,'l']]);

  // SST oscillator histogram
  var H2 = [[108,-32],[115,-28],[125,-20],[135,-20],[150,-18],[165,-15],[175,-12],[180,-6],[190,-7],[210,-5],[215,-8],[220,-3],[228,-4],[232,1],[235,2],[240,6],[245,10],[250,11],[255,8],[260,6],[265,-1],[270,7],[278,10],[285,15],[290,22],[295,18],[300,24],[302,25],[308,18],[315,13],[320,7],[323,1],[325,-5],[335,-7],[340,-14],[345,-20],[350,-15],[360,-8],[368,-5],[372,1],[375,8],[380,13],[388,18],[392,11],[396,17],[400,10],[405,25],[410,20],[415,17],[420,10],[428,33],[437,32],[445,28],[455,20],[470,20],[490,18],[500,15],[505,20],[510,25],[515,18],[520,22],[525,22],[530,15],[535,15],[540,5],[543,1],[548,-4],[553,-10],[557,-15],[562,-8],[568,-8],[570,2],[575,3],[580,3],[584,-18],[590,-22],[598,-22],[600,-15],[605,-17],[608,-22],[612,-10],[618,-7],[622,-8],[625,1],[630,2],[635,-4],[640,-5],[648,-8],[655,-17],[660,-30],[673,-30],[680,-20],[690,-17],[695,-18],[700,-22],[705,-28],[712,-15],[720,-16],[725,-20],[728,-23],[735,-30],[740,-23],[760,-25],[775,-23],[785,-28],[797,-32],[802,-20],[810,-12],[820,-8],[830,-6],[840,-5],[850,-3],[855,1],[858,3],[860,8],[865,-4],[870,-8],[875,-5],[878,3],[885,2],[890,4],[893,10],[900,10],[905,23],[910,32],[925,30],[930,32],[940,31],[952,31]];
  var h2 = document.getElementById('hist2');
  for (x = 108; x <= 952; x += 4) {
    v = Math.round(interp(H2, x));
    if (!v) continue;
    el(h2, 'rect', { x: x, y: v > 0 ? 587 - v : 588, width: 3, height: Math.abs(v), 'class': 'hist-w' });
  }
  [[105,-39],[425,38],[433,33],[665,-40],[669,-38],[725,-36],[913,39],[917,39],[933,39],[937,37],[954,37]].forEach(function (b) {
    el(h2, 'rect', { x: b[0], y: b[1] > 0 ? 587 - b[1] : 587, width: 3, height: Math.abs(b[1]), 'class': 'hist-k' });
  });

  // Direction squares
  var sq = document.getElementById('squares');
  function row(y, h, redRanges) {
    for (var px = 5; px <= 955; px += 4) {
      var isRed = redRanges.some(function (r) { return px >= r[0] && px < r[1]; });
      el(sq, 'rect', { x: px, y: y, width: 3, height: h, 'class': isRed ? 'sq-r' : 'sq-b' });
    }
  }
  row(634, 5, [[68,187],[263,287],[323,372],[535,627],[652,900]]);
  row(642, 5, [[52,175],[217,235],[260,288],[323,358],[535,565],[583,623],[635,806],[868,900]]);

  // Axis ticks
  var tk = document.getElementById('ticks');
  [85,118,151,184,217,250,283,316,349,382,415,446,474,533,550,587,624,640,656].forEach(function (y) {
    el(tk, 'line', { x1: 1313, x2: 1317, y1: y + .5, y2: y + .5, 'class': 'tick' });
  });
  for (x = 5; x <= 901; x += 64) {
    el(tk, 'line', { x1: x + .5, x2: x + .5, y1: 663, y2: 667, 'class': 'tick' });
  }
})();
```
